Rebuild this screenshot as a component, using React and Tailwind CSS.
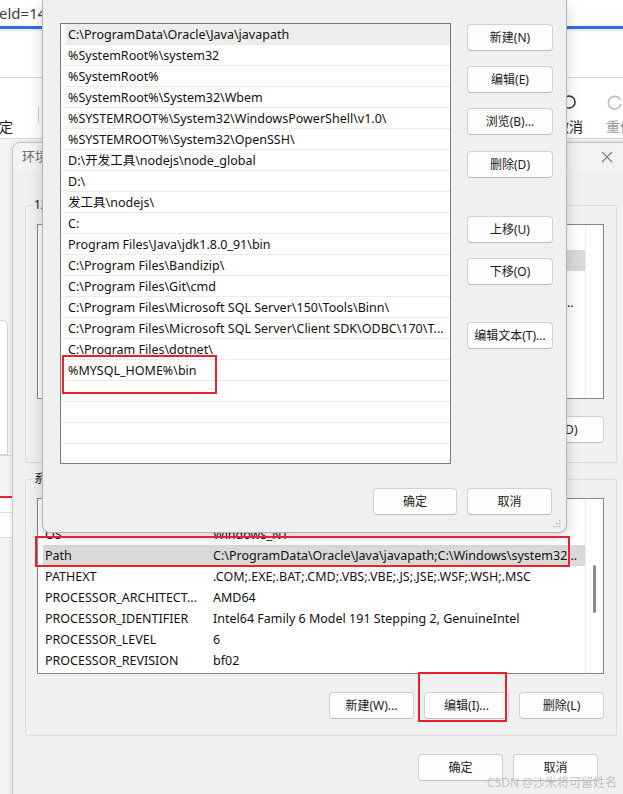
import React from "react";

const editPaths = [
  "C:\\ProgramData\\Oracle\\Java\\javapath",
  "%SystemRoot%\\system32",
  "%SystemRoot%",
  "%SystemRoot%\\System32\\Wbem",
  "%SYSTEMROOT%\\System32\\WindowsPowerShell\\v1.0\\",
  "%SYSTEMROOT%\\System32\\OpenSSH\\",
  "D:\\开发工具\\nodejs\\node_global",
  "D:\\",
  "发工具\\nodejs\\",
  "C:",
  "Program Files\\Java\\jdk1.8.0_91\\bin",
  "C:\\Program Files\\Bandizip\\",
  "C:\\Program Files\\Git\\cmd",
  "C:\\Program Files\\Microsoft SQL Server\\150\\Tools\\Binn\\",
  "C:\\Program Files\\Microsoft SQL Server\\Client SDK\\ODBC\\170\\T...",
  "C:\\Program Files\\dotnet\\",
  "%MYSQL_HOME%\\bin",
  "",
  "",
  "",
  "",
  "",
];

const userVars = [
  ["OneDrive", "C:\\Users\\admin\\OneDrive", true],
  ["Path", "C:\\Users\\admin\\AppData\\Local\\Microsoft\\WindowsApps", false],
  ["TEMP", "C:\\Users\\admin\\AppData\\Local\\Temp;C:\\Users\\admin\\AppData\\Local\\Temp\\Low\\Roaming\\Files", false],
  ["TMP", "C:\\Users\\admin\\AppData\\Local\\Temp", false],
];

const sysVars = [
  ["OS", "Windows_NT", false],
  ["Path", "C:\\ProgramData\\Oracle\\Java\\javapath;C:\\Windows\\system32;C:\\Windows;C:\\Windows\\System32\\Wbem", true],
  ["PATHEXT", ".COM;.EXE;.BAT;.CMD;.VBS;.VBE;.JS;.JSE;.WSF;.WSH;.MSC", false],
  ["PROCESSOR_ARCHITECT...", "AMD64", false],
  ["PROCESSOR_IDENTIFIER", "Intel64 Family 6 Model 191 Stepping 2, GenuineIntel", false],
  ["PROCESSOR_LEVEL", "6", false],
  ["PROCESSOR_REVISION", "bf02", false],
];

const Btn = ({ children, className = "" }) => (
  <div
    className={
      "h-[27px] flex items-center justify-center rounded-[4px] border border-[#d0d0d0] border-b-[#bcbcbc] bg-[#fdfdfd] text-[12px] text-[#1b1b1b] whitespace-nowrap " +
      className
    }
  >
    {children}
  </div>
);

const VarList = ({ rows, className }) => (
  <div className={"flex border border-[#828790] bg-white overflow-hidden " + className}>
    <div className="flex-1 flex flex-col min-w-0">
      <div className="h-[25px] shrink-0 flex items-center pl-[7px] text-[12.5px] text-[#333]">
        <span className="w-[158px]">变量</span>
        <span className="ml-[10px]">值</span>
      </div>
      {rows.map(([name, value, sel]) => (
        <div
          key={name}
          className={
            "h-[21px] shrink-0 flex items-center ml-[5px] pl-[2px] pt-[1px] text-[12.5px] text-[#111] whitespace-nowrap " +
            (sel ? "bg-[#d9d9d9]" : "")
          }
        >
          <span className="w-[158px] overflow-hidden">{name}</span>
          <span className="ml-[10px] flex-1 truncate pr-[7px]">{value}</span>
        </div>
      ))}
    </div>
    <div className="w-[18px] shrink-0 border-l border-[#ececec] flex flex-col">
      {rows.length > 5 && <div className="mt-[66px] ml-[7px] w-[3px] h-[48px] rounded-full bg-[#8b8b8b]" />}
    </div>
  </div>
);

const GroupBox = ({ label, className, children }) => (
  <div className={"relative border border-[#dcdcdc] rounded-[2px] " + className}>
    <span className="absolute -top-[9px] left-[7px] px-[1px] bg-[#f0f0f0] text-[12px] text-[#111] leading-[16px] whitespace-nowrap">
      {label}
    </span>
    {children}
  </div>
);

export default function App() {
  return (
    <div className="relative w-[623px] h-[794px] overflow-hidden bg-[#f4f4f4] font-['Noto_Sans','Noto_Sans_CJK_SC',sans-serif]">
      {/* browser behind */}
      <div className="absolute inset-0 flex flex-col">
        <div className="h-[26px] bg-white flex items-center text-[15px] text-[#3c3c3c] whitespace-nowrap">
          <span className="-ml-[1px]">eld=1400000</span>
        </div>
        <div className="h-[3px] bg-[#2f6fe4]" />
        <div className="h-[2px] bg-[#ececec]" />
        <div className="h-[47px] bg-white border-b border-[#d8d8d8]" />
        <div className="h-[61px] bg-white border-b border-[#dadada] flex items-end pb-[1px] text-[14px] text-[#222]">
          <span className="-ml-[15px] whitespace-nowrap">确定</span>
          <div className="ml-[25px] mb-[14px] w-px h-[16px] bg-[#cfcfcf]" />
          <div className="ml-auto flex items-end">
            <div className="flex flex-col items-center w-[32px]">
              <svg width="16" height="16" viewBox="0 0 16 16" className="mb-[6px]">
                <circle cx="8" cy="8" r="6" fill="none" stroke="#333" strokeWidth="1.6" />
              </svg>
              <span className="whitespace-nowrap">撤消</span>
            </div>
            <div className="ml-[21px] flex flex-col items-start w-[17px]">
              <svg width="17" height="17" viewBox="0 0 16 16" className="mb-[5px]">
                <path d="M13.5 5.5 A6 6 0 1 0 14 9.5" fill="none" stroke="#bdbdbd" strokeWidth="1.6" />
              </svg>
              <span className="whitespace-nowrap text-[#9a9a9a]">重做</span>
            </div>
          </div>
        </div>
        {/* left strip pieces */}
        <div className="flex-1 w-[12px] flex flex-col">
          <div className="h-[181px]" />
          <div className="h-[135px] w-[8px] bg-white border border-l-0 border-[#d2d2d2] rounded-tr-[6px]" />
          <div className="h-[41px] border-t border-[#d6d6d6]" />
          <div className="h-[2px] bg-[#e8212b]" />
          <div className="h-[14px] bg-white" />
          <div className="h-[26px] border-t border-b border-[#dedede] bg-white" />
        </div>
      </div>

      {/* 环境变量 dialog */}
      <div className="absolute left-[12px] top-[142px] w-[640px] h-[700px] bg-[#f0f0f0] border border-[#c4c4c4] rounded-tl-[8px] shadow-[0_0_6px_rgba(0,0,0,0.12)] flex flex-col">
        <div className="h-[28px] shrink-0 flex items-center justify-between pl-[9px] pr-[38px] bg-[#f3f3f3] rounded-tl-[8px]">
          <span className="text-[13px] text-[#6a6a6a] whitespace-nowrap">环境变量</span>
          <svg width="12" height="12" viewBox="0 0 12 12">
            <path d="M1 1 L11 11 M11 1 L1 11" stroke="#7a7a7a" strokeWidth="1.1" />
          </svg>
        </div>
        <GroupBox label="123 的用户变量(U)" className="ml-[12px] mt-[34px] w-[592px] h-[258px] shrink-0">
          <VarList rows={userVars} className="mt-[18px] ml-[11px] w-[567px] h-[175px]" />
          <div className="mt-[17px] mr-[12px] flex justify-end gap-[10px]">
            <Btn className="w-[85px]">新建(N)...</Btn>
            <Btn className="w-[85px]">编辑(E)...</Btn>
            <Btn className="w-[85px] pr-[8px]">删除(D)</Btn>
          </div>
        </GroupBox>
        <GroupBox label="系统变量(S)" className="ml-[12px] mt-[16px] w-[592px] h-[257px] shrink-0">
          <VarList rows={sysVars} className="mt-[18px] ml-[11px] w-[567px] h-[176px]" />
          <div className="mt-[18px] mr-[12px] flex justify-end gap-[10px]">
            <Btn className="w-[85px] h-[26px]">新建(W)...</Btn>
            <Btn className="w-[85px] h-[26px]">编辑(I)...</Btn>
            <Btn className="w-[85px] h-[26px]">删除(L)</Btn>
          </div>
        </GroupBox>
        <div className="mt-[18px] ml-[405px] flex gap-[10px]">
          <Btn className="w-[85px]">确定</Btn>
          <Btn className="w-[85px]">取消</Btn>
        </div>
      </div>

      {/* 编辑环境变量 dialog */}
      <div className="absolute left-[42px] top-0 w-[525px] h-[533px] bg-[#f0f0f0] border border-t-0 border-[#b4b4b4] rounded-b-[8px] shadow-[0_4px_14px_rgba(0,0,0,0.18)] flex flex-col">
        <div className="flex pt-[23px] pl-[17px]">
          <div className="w-[391px] h-[441px] border border-[#7a7a7a] bg-white overflow-hidden flex flex-col">
            {editPaths.map((p, i) => (
              <div
                key={i}
                className="h-[21px] shrink-0 border-b border-[#ebebeb] flex items-center ml-[1px] text-[12.5px] text-[#111] whitespace-nowrap"
              >
                <div className={"h-full flex items-center flex-1 ml-[4px] pl-[2px] pt-[2px] " + (i === 0 ? "bg-[#ededed]" : "")}>
                  {p}
                </div>
              </div>
            ))}
          </div>
          <div className="ml-[16px] w-[86px] flex flex-col">
            <Btn className="mt-[1px]">新建(N)</Btn>
            <Btn className="mt-[15px]">编辑(E)</Btn>
            <Btn className="mt-[15px]">浏览(B)...</Btn>
            <Btn className="mt-[16px]">删除(D)</Btn>
            <Btn className="mt-[38px]">上移(U)</Btn>
            <Btn className="mt-[15px]">下移(O)</Btn>
            <Btn className="mt-[37px]">编辑文本(T)...</Btn>
          </div>
        </div>
        <div className="mt-[24px] pr-[14px] flex justify-end gap-[10px]">
          <Btn className="w-[84px]">确定</Btn>
          <Btn className="w-[85px]">取消</Btn>
        </div>
        <div className="mt-auto mb-[4px] mr-[5px] flex justify-end">
          <svg width="9" height="9" viewBox="0 0 9 9">
            <g fill="#a8a8a8">
              <rect x="7" y="1" width="1.3" height="1.3" />
              <rect x="4" y="4" width="1.3" height="1.3" />
              <rect x="7" y="4" width="1.3" height="1.3" />
              <rect x="1" y="7" width="1.3" height="1.3" />
              <rect x="4" y="7" width="1.3" height="1.3" />
              <rect x="7" y="7" width="1.3" height="1.3" />
            </g>
          </svg>
        </div>
      </div>

      {/* red annotation boxes */}
      <div className="absolute left-[62px] top-[355px] w-[155px] h-[39px] border-2 border-[#e8212b]" />
      <div className="absolute left-[35px] top-[536px] w-[535px] h-[31px] border-2 border-[#e8212b]" />
      <div className="absolute left-[418px] top-[672px] w-[89px] h-[50px] border-2 border-[#e8212b]" />

      <div className="absolute right-[6px] bottom-[2px] text-[12px] text-[#b4b4b4]/80 whitespace-nowrap">
        CSDN @沙米将可留姓名
      </div>
    </div>
  );
}
